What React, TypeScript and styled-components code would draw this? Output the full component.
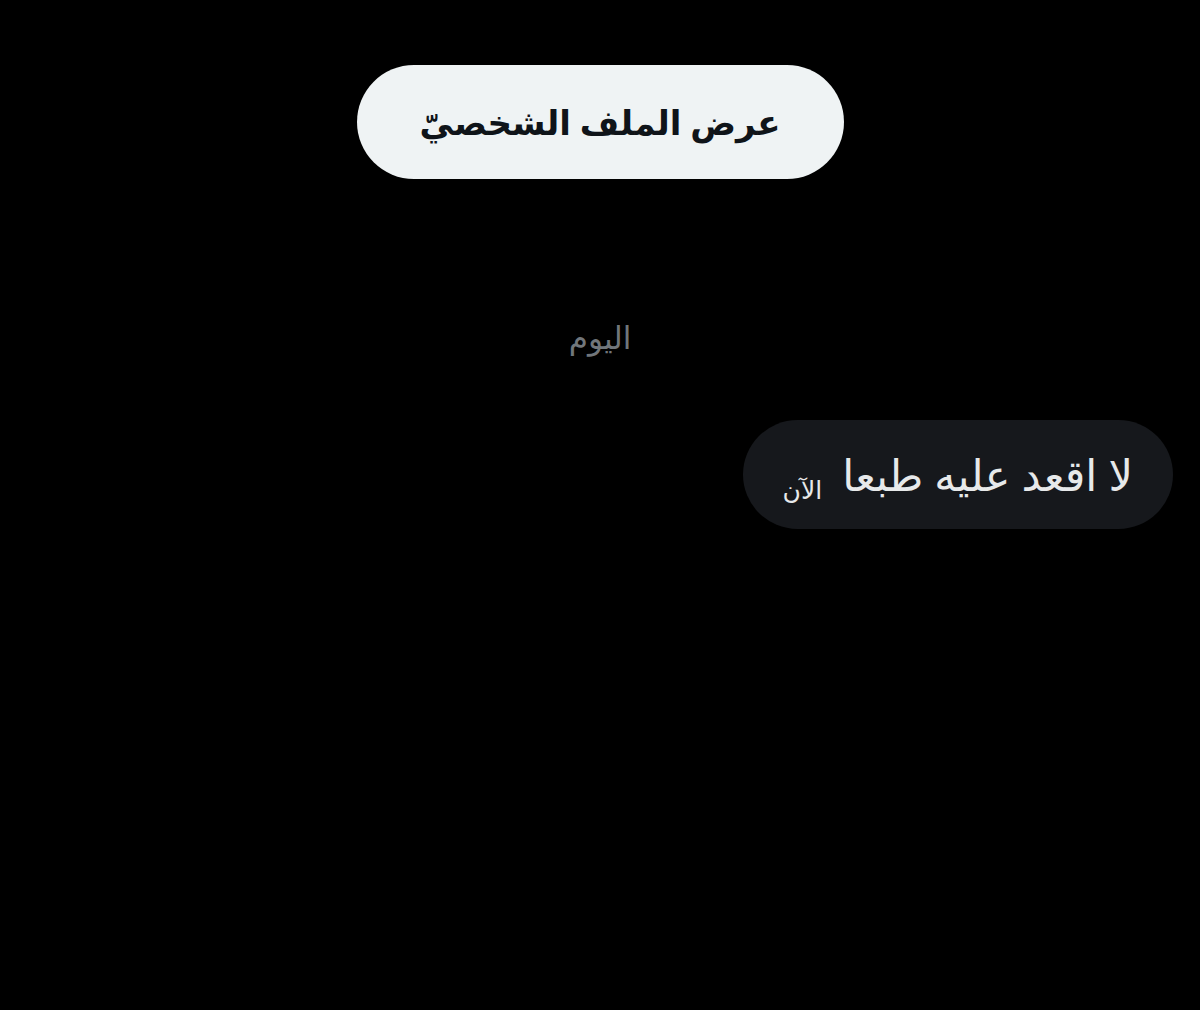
import React from "react";
import styled, { createGlobalStyle } from "styled-components";

const Global = createGlobalStyle`
  html, body { margin: 0; padding: 0; background: #000; }
  body { font-family: "Noto Sans", "DejaVu Sans", sans-serif; }
`;

const Page = styled.div`
  width: 1200px;
  height: 1010px;
  background: #000;
  display: flex;
  flex-direction: column;
  align-items: center;
  padding-top: 65px;
  box-sizing: border-box;
  direction: rtl;
`;

const ProfileButton = styled.button`
  width: 487px;
  height: 114px;
  border-radius: 57px;
  border: none;
  background: #eff3f4;
  color: #0f1419;
  font-family: inherit;
  font-size: 34px;
  font-weight: 700;
  display: flex;
  align-items: center;
  justify-content: center;
  padding: 0;
  cursor: pointer;
`;

const DayLabel = styled.div`
  margin-top: 136px;
  color: #71767b;
  font-size: 31px;
  line-height: 44px;
`;

const MessageRow = styled.div`
  align-self: stretch;
  display: flex;
  justify-content: flex-start;
  padding-right: 27px;
  margin-top: 61px;
`;

const Bubble = styled.div`
  height: 109px;
  width: 430px;
  box-sizing: border-box;
  border-radius: 55px;
  background: #16181c;
  display: flex;
  align-items: center;
  gap: 20px;
  padding: 0 40px 0 0;
`;

const MessageText = styled.span`
  color: #e7e9ea;
  font-size: 43px;
  line-height: 56px;
`;

const Time = styled.span`
  color: #e7e9ea;
  font-size: 25px;
  align-self: center;
  margin-top: 28px;
`;

export default function App() {
  return (
    <>
      <Global />
      <Page>
        <ProfileButton>عرض الملف الشخصيّ</ProfileButton>
        <DayLabel>اليوم</DayLabel>
        <MessageRow>
          <Bubble>
            <MessageText>لا اقعد عليه طبعا</MessageText>
            <Time>الآن</Time>
          </Bubble>
        </MessageRow>
      </Page>
    </>
  );
}
